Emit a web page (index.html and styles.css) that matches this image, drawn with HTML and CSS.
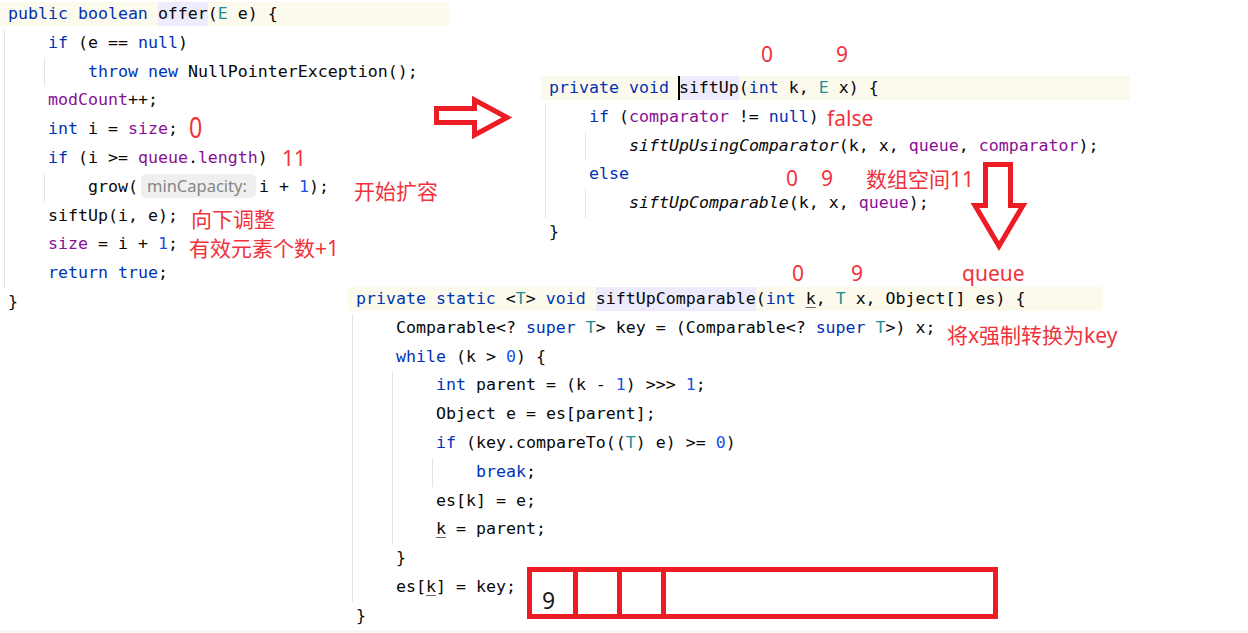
FILE: index.html
```html
<!DOCTYPE html>
<html lang="zh-CN">
<head>
<meta charset="utf-8">
<title>offer / siftUp</title>
<link rel="stylesheet" href="styles.css">
</head>
<body>
<div class="canvas">

  <div class="code b1">
    <div class="ln hl"><span class="k">public boolean</span> <span class="d">offer</span>(<span class="t">E</span> e) {</div>
    <div class="blk">
      <div class="ln"><span class="k">if</span> (e == <span class="k">null</span>)</div>
      <div class="blk"><div class="ln"><span class="k">throw new</span> NullPointerException();</div></div>
      <div class="ln"><span class="f">modCount</span>++;</div>
      <div class="ln"><span class="k">int</span> i = <span class="f">size</span>;</div>
      <div class="ln"><span class="k">if</span> (i &gt;= <span class="f">queue</span>.<span class="f">length</span>)</div>
      <div class="blk"><div class="ln">grow(<span class="hint">minCapacity:</span>i + <span class="n">1</span>);</div></div>
      <div class="ln">siftUp(i, e);</div>
      <div class="ln"><span class="f">size</span> = i + <span class="n">1</span>;</div>
      <div class="ln"><span class="k">return true</span>;</div>
    </div>
    <div class="ln">}</div>
  </div>

  <div class="code b2">
    <div class="ln hl"><span class="k">private void</span> <span class="d caret">siftUp</span>(<span class="k">int</span> k, <span class="t">E</span> x) {</div>
    <div class="blk">
      <div class="ln"><span class="k">if</span> (<span class="f">comparator</span> != <span class="k">null</span>)</div>
      <div class="blk"><div class="ln"><i>siftUpUsingComparator</i>(k, x, <span class="f">queue</span>, <span class="f">comparator</span>);</div></div>
      <div class="ln"><span class="k">else</span></div>
      <div class="blk"><div class="ln"><i>siftUpComparable</i>(k, x, <span class="f">queue</span>);</div></div>
    </div>
    <div class="ln">}</div>
  </div>

  <div class="code b3">
    <div class="ln hl"><span class="k">private static</span> &lt;<span class="t">T</span>&gt; <span class="k">void</span> <span class="d">siftUpComparable</span>(<span class="k">int</span> <span class="u">k</span>, <span class="t">T</span> x, Object[] es) {</div>
    <div class="blk">
      <div class="ln">Comparable&lt;? <span class="k">super</span> <span class="t">T</span>&gt; key = (Comparable&lt;? <span class="k">super</span> <span class="t">T</span>&gt;) x;</div>
      <div class="ln"><span class="k">while</span> (k &gt; <span class="n">0</span>) {</div>
      <div class="blk">
        <div class="ln"><span class="k">int</span> parent = (k - <span class="n">1</span>) &gt;&gt;&gt; <span class="n">1</span>;</div>
        <div class="ln">Object e = es[parent];</div>
        <div class="ln"><span class="k">if</span> (key.compareTo((<span class="t">T</span>) e) &gt;= <span class="n">0</span>)</div>
        <div class="blk"><div class="ln"><span class="k">break</span>;</div></div>
        <div class="ln">es[k] = e;</div>
        <div class="ln"><span class="u">k</span> = parent;</div>
      </div>
      <div class="ln">}</div>
      <div class="ln">es[<span class="u">k</span>] = key;</div>
    </div>
    <div class="ln">}</div>
  </div>

  <svg class="arrow arrow-right" width="95" height="55" viewBox="0 0 95 55">
    <polygon points="11.5,18.5 49.5,18.5 49.5,10 82,27.5 49.5,45 49.5,32.5 11.5,32.5"/>
  </svg>
  <svg class="arrow arrow-down" width="80" height="110" viewBox="0 0 80 110">
    <polygon points="25.5,14.5 50.5,14.5 50.5,55.5 63,55.5 39,96 15,55.5 25.5,55.5"/>
  </svg>

  <span class="note big0">0</span>
  <span class="note n-11">11</span>
  <span class="note n-grow">开始扩容</span>
  <span class="note n-sift">向下调整</span>
  <span class="note n-size">有效元素个数+1</span>

  <span class="note n-a0">0</span>
  <span class="note n-a9">9</span>
  <span class="note n-false">false</span>
  <span class="note n-b0">0</span>
  <span class="note n-b9">9</span>
  <span class="note n-space">数组空间11</span>

  <span class="note n-c0">0</span>
  <span class="note n-c9">9</span>
  <span class="note n-queue">queue</span>
  <span class="note n-cast">将x强制转换为key</span>

  <div class="cells">
    <div class="cell c1"><span class="val">9</span></div>
    <div class="cell c2"></div>
    <div class="cell c3"></div>
    <div class="cell c4"></div>
  </div>

</div>
<div class="strip"></div>
</body>
</html>
```

FILE: styles.css
```css
* { box-sizing: border-box; }

html, body {
  margin: 0;
  padding: 0;
  background: #ffffff;
}

body {
  width: 1248px;
  height: 633px;
  overflow: hidden;
}

.canvas {
  position: relative;
  height: 630px;
}

.strip {
  height: 3px;
  background: #f6f6f6;
}

/* ---------- code snippets ---------- */
.code {
  position: absolute;
  padding-left: 8px;
  font-family: "DejaVu Sans Mono", "Liberation Mono", monospace;
  font-size: 16.6px;
  line-height: 28.8px;
  color: #080808;
}

.b1 { left: 0; top: 0; width: 449px; }
.b2 { left: 541px; top: 74px; width: 589px; }
.b3 { left: 348px; top: 285px; width: 755px; }

.ln {
  height: 28.8px;
  white-space: pre;
}

.hl {
  margin-left: -8px;
  padding-left: 8px;
  background: linear-gradient(#fcfaed, #fcfaed) 0 2.4px / 100% 24px no-repeat;
}

.blk {
  margin-left: -4px;
  padding-left: 43px;
  border-left: 1px solid #e4e4e4;
}

.k { color: #0033b3; }
.f { color: #871094; }
.n { color: #1750eb; }
.t { color: #1d8f96; }
.code i { font-style: italic; }

.u {
  text-decoration: underline;
  text-decoration-color: #6b6b6b;
  text-underline-offset: 3px;
  text-decoration-thickness: 1px;
}

.d {
  display: inline-block;
  line-height: 24px;
  background: #edebfc;
}

.caret { position: relative; }
.caret::before {
  content: "";
  position: absolute;
  left: -1px;
  top: 0;
  width: 2px;
  height: 24px;
  background: #000;
}

.hint {
  display: inline-block;
  width: 115px;
  margin: 0 3px;
  padding-left: 6px;
  line-height: 24px;
  border-radius: 5px;
  background: #efefef;
  color: #858585;
  font-family: "Noto Sans", "Open Sans", sans-serif;
  font-size: 16.5px;
}

/* ---------- red annotations ---------- */
.arrow {
  position: absolute;
  fill: none;
  stroke: #ed1c24;
  stroke-width: 5;
  stroke-linejoin: miter;
}
.arrow-right { left: 425px; top: 90px; }
.arrow-down { left: 960px; top: 150px; }

.note {
  position: absolute;
  font-family: "Noto Sans", "Noto Sans CJK SC", sans-serif;
  font-size: 21px;
  line-height: 21px;
  color: #f0323c;
  white-space: nowrap;
}

.big0 {
  left: 189px;
  top: 112px;
  font-size: 29px;
  line-height: 29px;
  transform: scaleX(0.8);
  transform-origin: left top;
}
.n-11 { left: 282px; top: 148px; }
.n-grow { left: 354px; top: 181px; }
.n-sift { left: 191px; top: 209px; }
.n-size { left: 189px; top: 238px; }

.n-a0 { left: 761px; top: 44px; }
.n-a9 { left: 836px; top: 44px; }
.n-false { left: 827px; top: 108px; }
.n-b0 { left: 786px; top: 168px; }
.n-b9 { left: 821px; top: 168px; }
.n-space { left: 866px; top: 169px; }

.n-c0 { left: 792px; top: 263px; }
.n-c9 { left: 851px; top: 263px; }
.n-queue { left: 962px; top: 263px; }
.n-cast { left: 947px; top: 325px; }

/* ---------- array boxes ---------- */
.cells {
  position: absolute;
  left: 527px;
  top: 567px;
  width: 471px;
  height: 52px;
  display: flex;
  border: 5px solid #ed1c24;
}

.cell {
  height: 100%;
  border-right: 5px solid #ed1c24;
}
.c1 { width: 46px; }
.c2 { width: 44px; }
.c3 { width: 44px; }
.c4 { flex: 1; border-right: none; }

.val {
  display: block;
  padding: 17px 0 0 10px;
  font-family: "Noto Sans", sans-serif;
  font-size: 23px;
  line-height: 23px;
  color: #1a1a1a;
}
```
